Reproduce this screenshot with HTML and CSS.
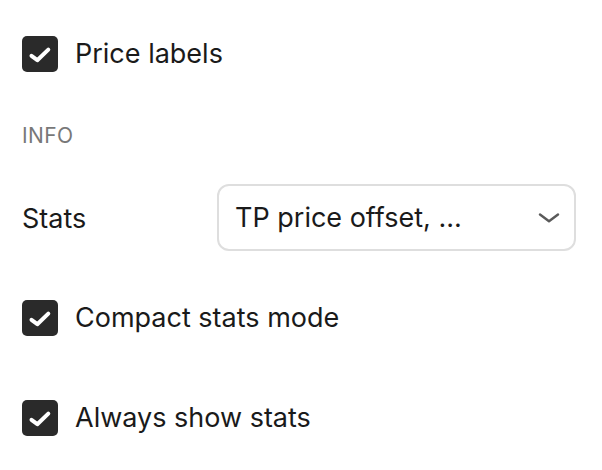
FILE: index.html
```html
<!DOCTYPE html>
<html>
<head>
<meta charset="utf-8">
<link rel="stylesheet" href="styles.css">
</head>
<body>
<div class="panel">
  <label class="check-row first">
    <span class="box"><svg viewBox="0 0 36 36" width="36" height="36"><path d="M9.5 19.8 L15.3 24.2 L26.3 13.6" fill="none" stroke="#fff" stroke-width="4" stroke-linecap="round" stroke-linejoin="round"/></svg></span>
    <span class="label">Price labels</span>
  </label>
  <div class="section">INFO</div>
  <div class="field-row">
    <span class="label">Stats</span>
    <div class="select">
      <span class="select-text">TP price offset, ...</span>
      <svg class="chev" viewBox="0 0 22 10" width="22" height="10"><path d="M2 1.5 L11 8.3 L20 1.5" fill="none" stroke="#5a5a5a" stroke-width="2.4" stroke-linecap="round" stroke-linejoin="round"/></svg>
    </div>
  </div>
  <label class="check-row compact">
    <span class="box"><svg viewBox="0 0 36 36" width="36" height="36"><path d="M9.5 19.8 L15.3 24.2 L26.3 13.6" fill="none" stroke="#fff" stroke-width="4" stroke-linecap="round" stroke-linejoin="round"/></svg></span>
    <span class="label">Compact stats mode</span>
  </label>
  <label class="check-row always">
    <span class="box"><svg viewBox="0 0 36 36" width="36" height="36"><path d="M9.5 19.8 L15.3 24.2 L26.3 13.6" fill="none" stroke="#fff" stroke-width="4" stroke-linecap="round" stroke-linejoin="round"/></svg></span>
    <span class="label">Always show stats</span>
  </label>
</div>
</body>
</html>
```
FILE: styles.css
```css
html, body {
  margin: 0;
  padding: 0;
  background: #ffffff;
}
body {
  font-family: Inter, "Noto Sans", "Liberation Sans", sans-serif;
  color: #1a1a1a;
  width: 602px;
  height: 470px;
  overflow: hidden;
}
.panel {
  display: flex;
  flex-direction: column;
  padding: 36px 26px 0 22px;
}
.check-row {
  display: flex;
  align-items: center;
  height: 36px;
  gap: 17px;
}
.box {
  width: 36px;
  height: 36px;
  border-radius: 5px;
  background: #2a2a2a;
  display: block;
  flex: none;
}
.box svg {
  display: block;
}
.label {
  font-size: 27px;
  line-height: 36px;
  color: #1a1a1a;
}
.section {
  margin-top: 48px;
  font-size: 21px;
  line-height: 32px;
  color: #787878;
  letter-spacing: 0.4px;
}
.field-row {
  margin-top: 32px;
  display: grid;
  grid-template-columns: 195px 359px;
  align-items: center;
}
.field-row .label {
  padding-top: 2px;
}
.select {
  height: 67px;
  box-sizing: border-box;
  border: 2px solid #dedede;
  border-radius: 12px;
  display: flex;
  align-items: center;
  justify-content: space-between;
  padding: 0 14px 0 16px;
}
.select-text {
  font-size: 27px;
  color: #1a1a1a;
}
.chev {
  display: block;
}
.compact {
  margin-top: 49px;
}
.always {
  margin-top: 64px;
}
```
